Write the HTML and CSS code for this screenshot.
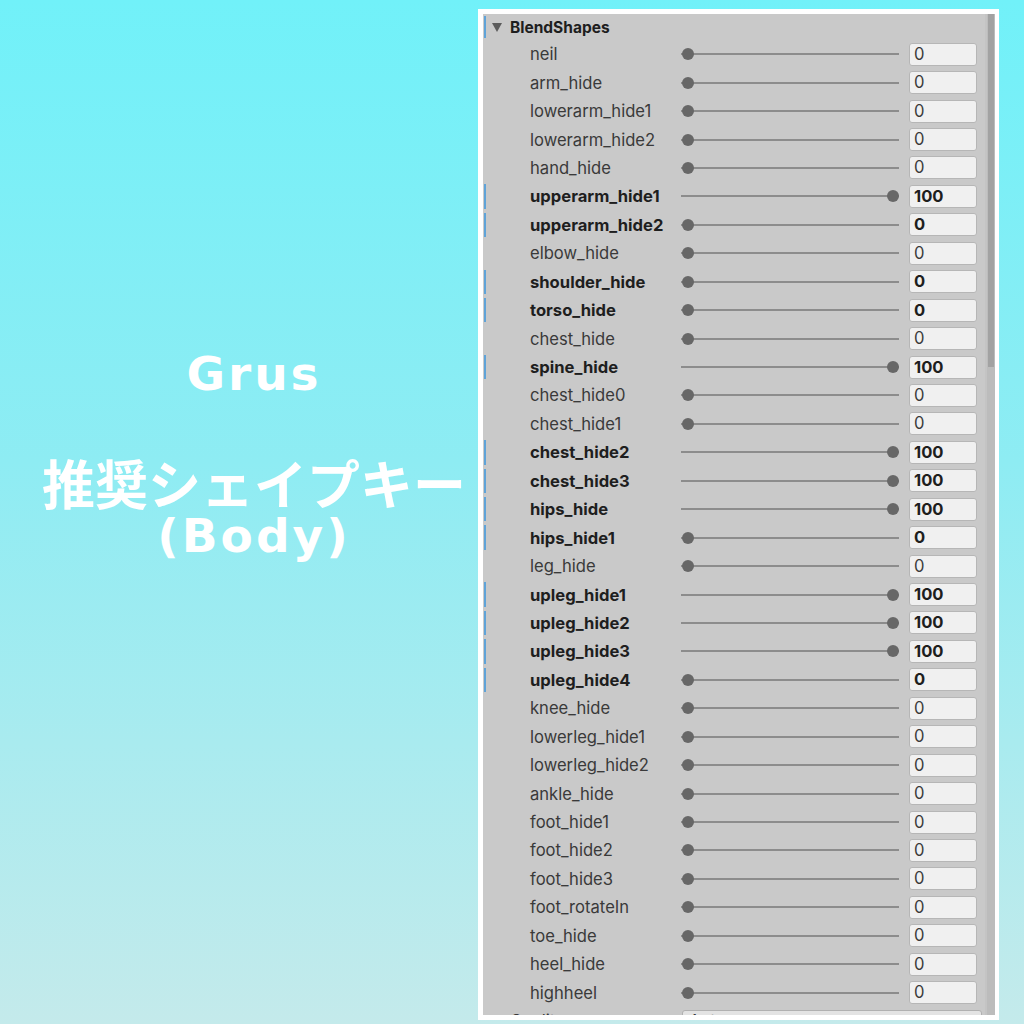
FILE: index.html
```html
<!DOCTYPE html>
<html lang="ja">
<head>
<meta charset="utf-8">
<title>Grus BlendShapes</title>
<link rel="stylesheet" href="styles.css">
</head>
<body>
<div class="page">
  <section class="title">
    <div class="line latin">Grus</div>
    <div class="line">&nbsp;</div>
    <div class="line jp">推奨シェイプキー</div>
    <div class="line latin">(Body)</div>
  </section>

  <div class="frame">
    <div class="panel">
      <div class="list">
        <div class="header mod"><span class="tri"></span>BlendShapes</div>

        <div class="row"><span class="label">neil</span><span class="slider"><i class="knob"></i></span><span class="field">0</span></div>
        <div class="row"><span class="label">arm_hide</span><span class="slider"><i class="knob"></i></span><span class="field">0</span></div>
        <div class="row"><span class="label">lowerarm_hide1</span><span class="slider"><i class="knob"></i></span><span class="field">0</span></div>
        <div class="row"><span class="label">lowerarm_hide2</span><span class="slider"><i class="knob"></i></span><span class="field">0</span></div>
        <div class="row"><span class="label">hand_hide</span><span class="slider"><i class="knob"></i></span><span class="field">0</span></div>
        <div class="row mod"><span class="label">upperarm_hide1</span><span class="slider full"><i class="knob"></i></span><span class="field">100</span></div>
        <div class="row mod"><span class="label">upperarm_hide2</span><span class="slider"><i class="knob"></i></span><span class="field">0</span></div>
        <div class="row"><span class="label">elbow_hide</span><span class="slider"><i class="knob"></i></span><span class="field">0</span></div>
        <div class="row mod"><span class="label">shoulder_hide</span><span class="slider"><i class="knob"></i></span><span class="field">0</span></div>
        <div class="row mod"><span class="label">torso_hide</span><span class="slider"><i class="knob"></i></span><span class="field">0</span></div>
        <div class="row"><span class="label">chest_hide</span><span class="slider"><i class="knob"></i></span><span class="field">0</span></div>
        <div class="row mod"><span class="label">spine_hide</span><span class="slider full"><i class="knob"></i></span><span class="field">100</span></div>
        <div class="row"><span class="label">chest_hide0</span><span class="slider"><i class="knob"></i></span><span class="field">0</span></div>
        <div class="row"><span class="label">chest_hide1</span><span class="slider"><i class="knob"></i></span><span class="field">0</span></div>
        <div class="row mod"><span class="label">chest_hide2</span><span class="slider full"><i class="knob"></i></span><span class="field">100</span></div>
        <div class="row mod"><span class="label">chest_hide3</span><span class="slider full"><i class="knob"></i></span><span class="field">100</span></div>
        <div class="row mod"><span class="label">hips_hide</span><span class="slider full"><i class="knob"></i></span><span class="field">100</span></div>
        <div class="row mod"><span class="label">hips_hide1</span><span class="slider"><i class="knob"></i></span><span class="field">0</span></div>
        <div class="row"><span class="label">leg_hide</span><span class="slider"><i class="knob"></i></span><span class="field">0</span></div>
        <div class="row mod"><span class="label">upleg_hide1</span><span class="slider full"><i class="knob"></i></span><span class="field">100</span></div>
        <div class="row mod"><span class="label">upleg_hide2</span><span class="slider full"><i class="knob"></i></span><span class="field">100</span></div>
        <div class="row mod"><span class="label">upleg_hide3</span><span class="slider full"><i class="knob"></i></span><span class="field">100</span></div>
        <div class="row mod"><span class="label">upleg_hide4</span><span class="slider"><i class="knob"></i></span><span class="field">0</span></div>
        <div class="row"><span class="label">knee_hide</span><span class="slider"><i class="knob"></i></span><span class="field">0</span></div>
        <div class="row"><span class="label">lowerleg_hide1</span><span class="slider"><i class="knob"></i></span><span class="field">0</span></div>
        <div class="row"><span class="label">lowerleg_hide2</span><span class="slider"><i class="knob"></i></span><span class="field">0</span></div>
        <div class="row"><span class="label">ankle_hide</span><span class="slider"><i class="knob"></i></span><span class="field">0</span></div>
        <div class="row"><span class="label">foot_hide1</span><span class="slider"><i class="knob"></i></span><span class="field">0</span></div>
        <div class="row"><span class="label">foot_hide2</span><span class="slider"><i class="knob"></i></span><span class="field">0</span></div>
        <div class="row"><span class="label">foot_hide3</span><span class="slider"><i class="knob"></i></span><span class="field">0</span></div>
        <div class="row"><span class="label">foot_rotateIn</span><span class="slider"><i class="knob"></i></span><span class="field">0</span></div>
        <div class="row"><span class="label">toe_hide</span><span class="slider"><i class="knob"></i></span><span class="field">0</span></div>
        <div class="row"><span class="label">heel_hide</span><span class="slider"><i class="knob"></i></span><span class="field">0</span></div>
        <div class="row"><span class="label">highheel</span><span class="slider"><i class="knob"></i></span><span class="field">0</span></div>

        <div class="prop"><span class="prop-label">Quality</span><span class="dropdown">Auto</span></div>
      </div>
      <div class="scrollbar"><div class="thumb"></div></div>
    </div>
  </div>
</div>
</body>
</html>
```

FILE: styles.css
```css
* {
  box-sizing: border-box;
}

html, body {
  margin: 0;
  padding: 0;
}

body {
  width: 1024px;
  height: 1024px;
  overflow: hidden;
  background: linear-gradient(to bottom, #71f1f9 0%, #8eecf3 45%, #c4eaeb 100%);
}

.page {
  display: flex;
  align-items: flex-start;
  height: 1024px;
}

/* ---------- left caption ---------- */
.title {
  width: 478px;
  padding-left: 30px;
  padding-top: 348px;
  color: #ffffff;
  text-align: center;
  font-weight: 700;
}

.title .line {
  height: 52px;
  line-height: 52px;
  margin-bottom: 2px;
  white-space: nowrap;
  overflow: visible;
}

.title .latin {
  font-family: "DejaVu Sans", "Liberation Sans", sans-serif;
  font-size: 47px;
  letter-spacing: 3px;
}

.title .jp {
  font-family: "Noto Sans CJK JP", sans-serif;
  font-size: 53px;
  line-height: 52px;
}

/* ---------- inspector frame ---------- */
.frame {
  margin-top: 9px;
  width: 521px;
  height: 1011px;
  padding: 5px 4px 5px 5px;
  background: #ffffff;
}

.panel {
  display: flex;
  height: 100%;
  background: #c9c9c9;
  overflow: hidden;
}

.list {
  flex: 1;
  overflow: hidden;
  font-family: "Inter", "Roboto", sans-serif;
  font-size: 16.6px;
  color: #3a3a3a;
}

.header {
  position: relative;
  height: 26px;
  display: flex;
  align-items: center;
  padding-left: 9px;
  font-weight: 700;
  font-size: 15.5px;
  color: #1e1e1e;
}

.tri {
  width: 0;
  height: 0;
  border-left: 5px solid transparent;
  border-right: 5px solid transparent;
  border-top: 9px solid #5c5c5c;
  margin-right: 8px;
}

.row {
  position: relative;
  height: 28.45px;
  display: grid;
  grid-template-columns: 142px 218px 69px;
  column-gap: 9px;
  align-items: center;
  padding-left: 47px;
}

.row:first-of-type {
  margin-top: 1px;
}

/* modified-property marker on the left edge */
.mod::before {
  content: "";
  position: absolute;
  left: 1px;
  top: 2px;
  bottom: 2px;
  width: 2px;
  background: #5fa3d8;
}

.row.mod .label,
.row.mod .field {
  font-weight: 700;
  color: #1e1e1e;
}

.label {
  white-space: nowrap;
}

.slider {
  position: relative;
  height: 12px;
  display: flex;
  align-items: center;
}

.slider::before {
  content: "";
  display: block;
  width: 100%;
  height: 2px;
  background: #8c8c8c;
}

.knob {
  position: absolute;
  left: 1px;
  top: 0;
  width: 12px;
  height: 12px;
  border-radius: 50%;
  background: #676767;
}

.slider.full .knob {
  left: auto;
  right: 0;
}

.field {
  height: 23px;
  line-height: 21px;
  padding-left: 4px;
  border: 1px solid #b6b6b6;
  border-radius: 3px;
  background: #f0f0f0;
  color: #3a3a3a;
  margin-left: 1px;
}

.prop {
  height: 28px;
  display: grid;
  grid-template-columns: 172px 300px;
  align-items: center;
  padding-left: 27px;
}

.dropdown {
  height: 22px;
  line-height: 20px;
  padding-left: 6px;
  border: 1px solid #b0b0b0;
  border-radius: 3px;
  background: #e3e3e3;
}

/* ---------- scrollbar ---------- */
.scrollbar {
  width: 10px;
  background: #bcbcbc;
  border-left: 2px solid #c4c4c4;
}

.thumb {
  margin-left: 1px;
  width: 6px;
  height: 353px;
  background: #a2a2a2;
}
```
